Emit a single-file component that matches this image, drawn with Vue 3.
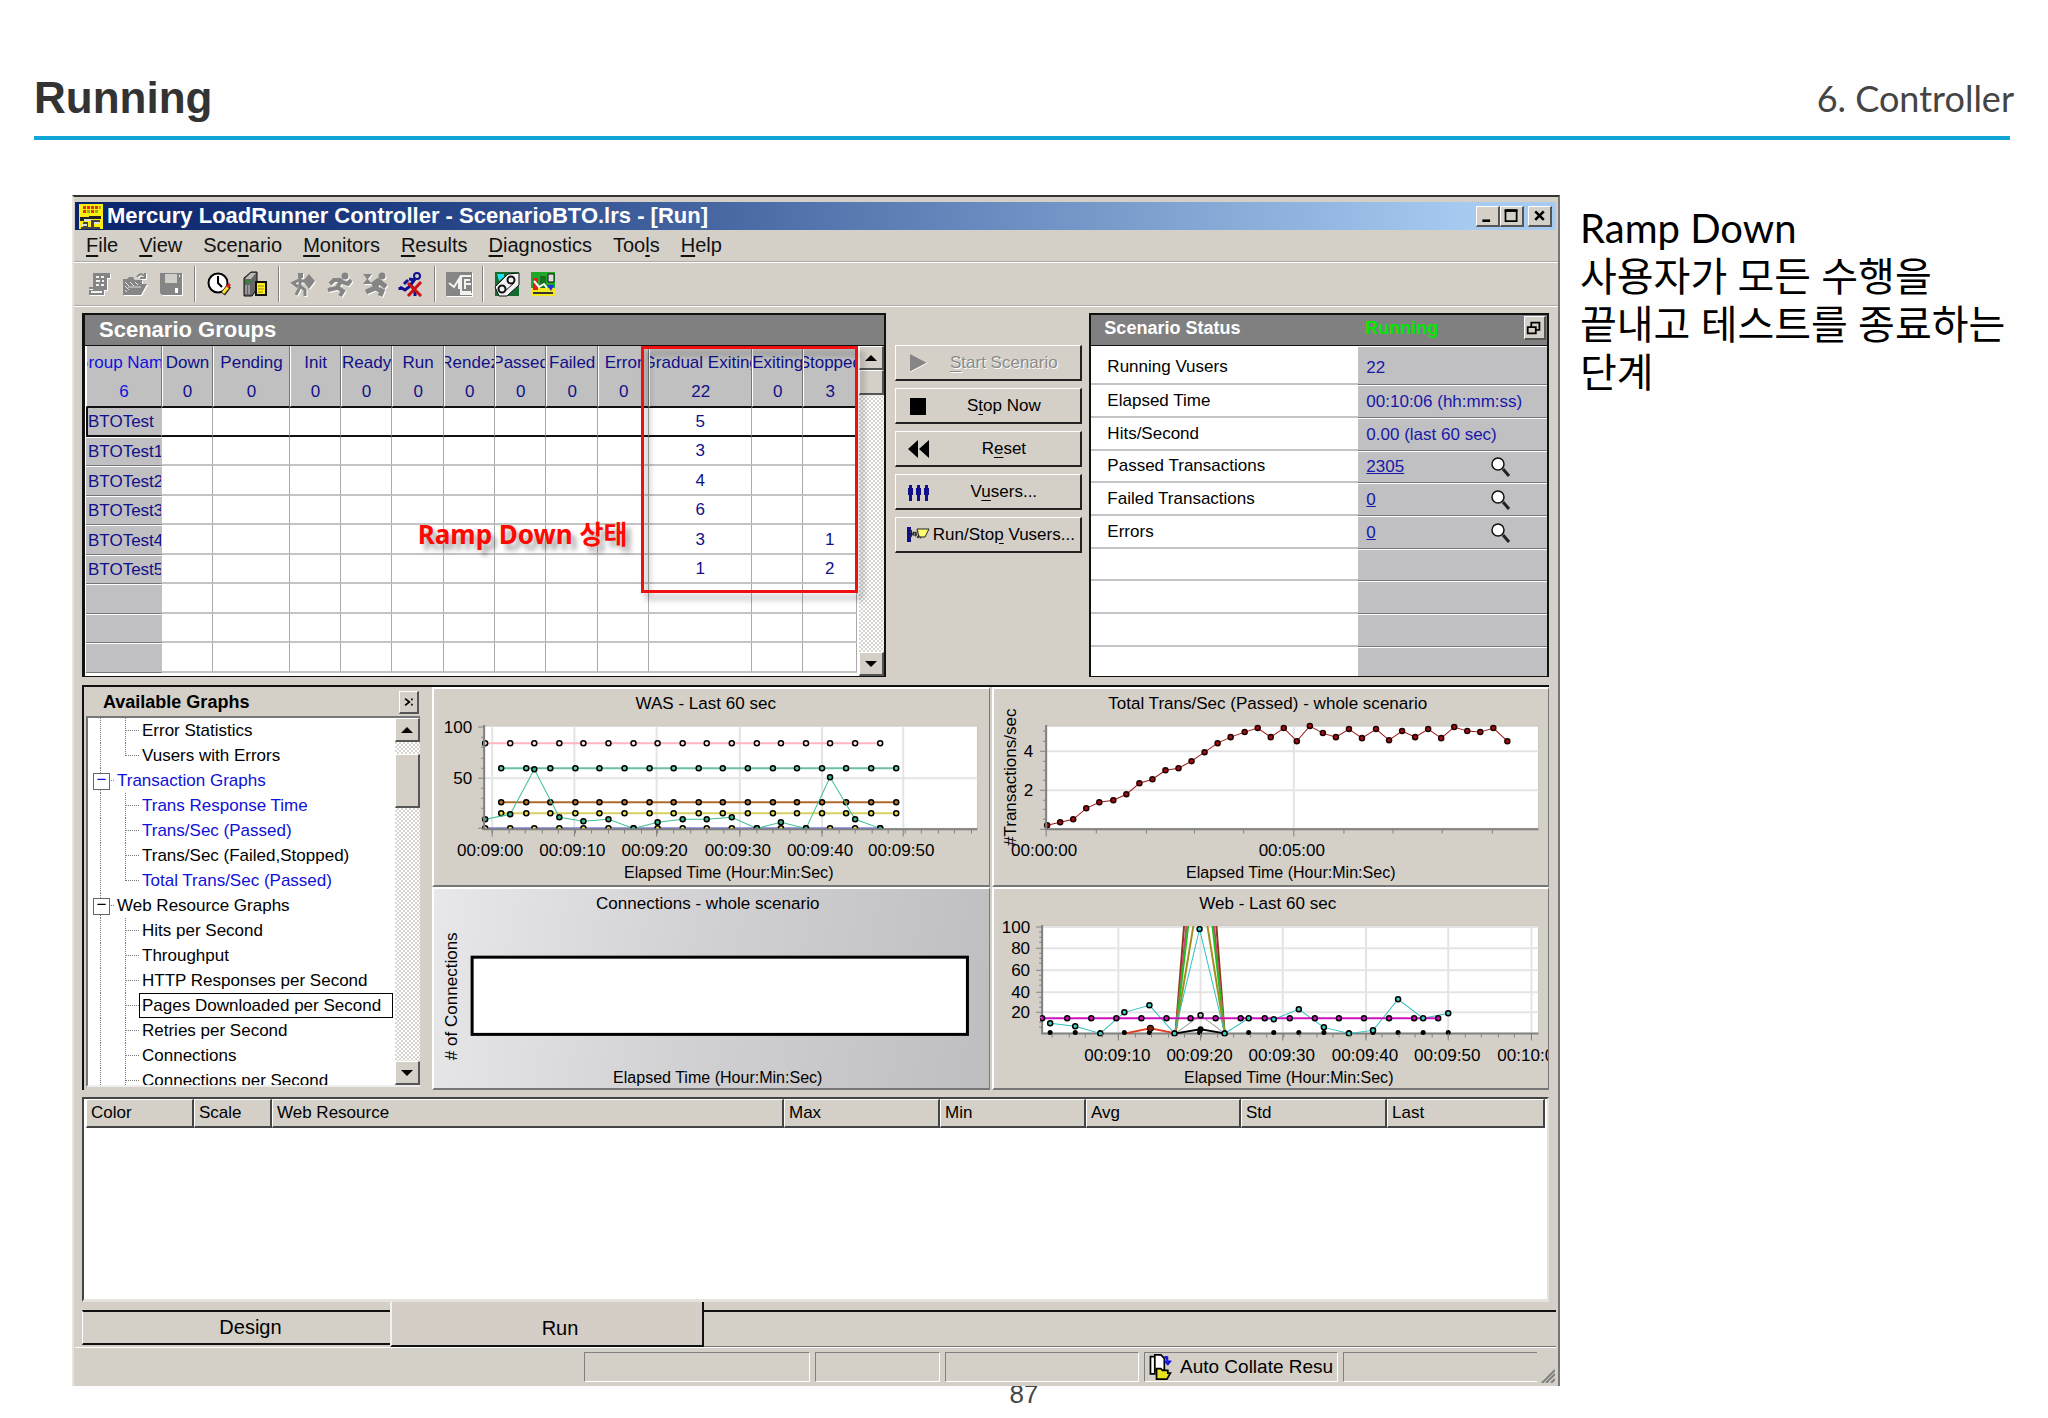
<script setup>
const menus = [
  ['', 'F', 'ile'], ['', 'V', 'iew'], ['Sce', 'n', 'ario'], ['', 'M', 'onitors'],
  ['', 'R', 'esults'], ['', 'D', 'iagnostics'], ['Too', 'l', 's'], ['', 'H', 'elp'],
]

const columns = [
  { name: 'Group Name', total: 6, width: 76 },
  { name: 'Down', total: 0, width: 51 },
  { name: 'Pending', total: 0, width: 77 },
  { name: 'Init', total: 0, width: 51 },
  { name: 'Ready', total: 0, width: 51 },
  { name: 'Run', total: 0, width: 52 },
  { name: 'Rendez', total: 0, width: 51 },
  { name: 'Passed', total: 0, width: 51 },
  { name: 'Failed', total: 0, width: 52 },
  { name: 'Error', total: 0, width: 51 },
  { name: 'Gradual Exiting', total: 22, width: 103 },
  { name: 'Exiting', total: 0, width: 51 },
  { name: 'Stopped', total: 3, width: 54 },
]
const groups = [
  { name: 'BTOTest', exiting: 5 },
  { name: 'BTOTest1', exiting: 3 },
  { name: 'BTOTest2', exiting: 4 },
  { name: 'BTOTest3', exiting: 6 },
  { name: 'BTOTest4', exiting: 3, stopped: 1 },
  { name: 'BTOTest5', exiting: 1, stopped: 2 },
  {}, {}, {},
]
const cell = (g, i) => (i === 10 ? g.exiting : i === 12 ? g.stopped : '')

const status = [
  { label: 'Running Vusers', value: '22' },
  { label: 'Elapsed Time', value: '00:10:06 (hh:mm:ss)' },
  { label: 'Hits/Second', value: '0.00 (last 60 sec)' },
  { label: 'Passed Transactions', value: '2305', link: true },
  { label: 'Failed Transactions', value: '0', link: true },
  { label: 'Errors', value: '0', link: true },
  {}, {}, {}, {},
]

const tree = [
  { text: 'Error Statistics' },
  { text: 'Vusers with Errors', last: true },
  { text: 'Transaction Graphs', parent: true, active: true },
  { text: 'Trans Response Time', active: true },
  { text: 'Trans/Sec (Passed)', active: true },
  { text: 'Trans/Sec (Failed,Stopped)' },
  { text: 'Total Trans/Sec (Passed)', active: true, last: true },
  { text: 'Web Resource Graphs', parent: true },
  { text: 'Hits per Second' },
  { text: 'Throughput' },
  { text: 'HTTP Responses per Second' },
  { text: 'Pages Downloaded per Second', focus: true },
  { text: 'Retries per Second' },
  { text: 'Connections' },
  { text: 'Connections per Second' },
]

const series = (x0, step, ys) => ys.map((y, i) => [Math.round(x0 + step * i), y])
const flat = (x0, step, n, y) => series(x0, step, Array(n).fill(y))
const line = (pts) => pts.map((p) => p.join(',')).join(' ')

const was = [
  { color: '#ffb6c1', dot: '#ffe4e8', pts: flat(51, 24.6, 17, 54) },
  { color: '#6cc0a8', dot: '#66cdaa', pts: flat(67, 24.6, 17, 79) },
  { color: '#b06a28', dot: '#b8762b', pts: flat(67, 24.6, 17, 113) },
  { color: '#d8d060', dot: '#e6e04a', pts: flat(67, 24.6, 17, 124) },
  { color: '#8080e0', dot: '#e6e04a', pts: flat(51, 24.6, 17, 139) },
  { color: '#3cc090', dot: '#3cb890', pts: series(51, 24.6, [130, 125, 80, 128, 132, 130, 139, 133, 130, 130, 128, 139, 133, 139, 88, 130, 139]) },
]
const wasTicks = [['00:09:00', 58], ['00:09:10', 140], ['00:09:20', 222], ['00:09:30', 305], ['00:09:40', 387], ['00:09:50', 468]]

const trans = series(53, 13.1, [136, 133, 130, 119, 113, 111, 105, 94, 90, 81, 79, 72, 63, 54, 48, 43, 39, 48, 39, 52, 37, 44, 48, 40, 49, 40, 51, 42, 48, 40, 49, 38, 42, 43, 39, 52])

const webCyan = series(56, 24.8, [134, 137, 144, 123, 116, 144, 40, 144, 129, 130, 120, 138, 144, 141, 110, 129, 124])
const webBase = flat(56, 24.8, 17, 144)
const webMagenta = flat(48, 24.7, 17, 129)
const webSpikes = [['#8b3a1a', -169], ['#d04070', -100], ['#20c020', -68], ['#a09020', -6]]
const webTicks = [['00:09:10', 124], ['00:09:20', 206], ['00:09:30', 288], ['00:09:40', 371], ['00:09:50', 453], ['00:10:00', 536]]
const webY = [[100, 38], [80, 59], [60, 81], [40, 103], [20, 123]]

const resultCols = [['Color', 108], ['Scale', 78], ['Web Resource', 512], ['Max', 156], ['Min', 146], ['Avg', 155], ['Std', 146], ['Last', 158]]
</script>

<template>
  <div class="page">
    <header class="page-head">
      <h1>Running</h1>
      <p>6. Controller</p>
    </header>

    <main class="content">
      <section class="window">
        <div class="titlebar">
          <svg class="app-icon" viewBox="0 0 24 25" shape-rendering="crispEdges">
            <rect width="24" height="25" fill="#ffee10" />
            <path d="M4 2h3v3H4zM8 2h3v3H8zM12 2h3v3h-3zM16 2h3v3h-3zM4 6h3v3H4zM12 6h3v3h-3z" fill="#e23018" />
            <path d="M8 6h3v3H8zM16 6h3v3h-3zM20 2h2v3h-2z" fill="#88b020" />
            <path d="M1 13h9v-1h12v3H11v2H1z" fill="#222" />
            <path d="M4 18h5v5h3v-7h9v2h-6v5h6v2H2v-2h2z" fill="#444" />
            <path d="M5 16h7M15 19h6M3 21h5" stroke="#ddd" stroke-width="2" />
          </svg>
          <h2>Mercury LoadRunner Controller - ScenarioBTO.lrs - [Run]</h2>
          <div class="win-buttons">
            <button type="button" aria-label="Minimize"><svg viewBox="0 0 24 21"><path d="M6 16h9" stroke="#000" stroke-width="3" /></svg></button>
            <button type="button" aria-label="Maximize"><svg viewBox="0 0 24 21"><path d="M5 4.500h13v12H5z" fill="none" stroke="#000" stroke-width="2" /><path d="M4 4h15" stroke="#000" stroke-width="3" /></svg></button>
            <button type="button" aria-label="Close" class="close"><svg viewBox="0 0 24 21"><path d="M7 5l10 10M17 5L7 15" stroke="#000" stroke-width="3" /></svg></button>
          </div>
        </div>

        <nav class="menubar">
          <a v-for="m in menus" :key="m[1] + m[2]" href="#">{{ m[0] }}<u>{{ m[1] }}</u>{{ m[2] }}</a>
        </nav>

        <div class="toolbar">
          <button type="button" aria-label="New" class="off"><svg viewBox="0 0 26 26"><path d="M7 2h17v5h-3v12h-3v5H3v-5h4z" fill="#858585" /><path d="M10 6h3M15 6h3M10 10h4M16 10h2M10 14h3M15 14h3M5 21h11" stroke="#f4f2ee" stroke-width="2" /><path d="M8 2v15H3" fill="none" stroke="#858585" stroke-width="2" /></svg></button>
          <button type="button" aria-label="Open" class="off"><svg viewBox="0 0 26 26"><path d="M1 8h4l2-2h4l2 3h7v4h5l-6 11H1z" fill="#858585" /><path d="M15 6q4-5 7-1M23 2v5h-5" fill="none" stroke="#858585" stroke-width="2" /><path d="M3 11l4 4M3 15l4 4M8 11l4 4M13 11l3 3M3 19l2 2" stroke="#e8e6e0" stroke-width="1" /><path d="M6 16h13" stroke="#ddd" /></svg></button>
          <button type="button" aria-label="Save" class="off"><svg viewBox="0 0 26 26"><path d="M2 2h22v22H4l-2-2z" fill="#858585" /><path d="M7 3h12v9H7z" fill="#d0cec8" /><path d="M17 17h3v5h-3zM21 4h1v2h-1z" fill="#fff" /></svg></button>
          <i></i>
          <button type="button" aria-label="Schedule"><svg viewBox="0 0 26 26"><circle cx="12" cy="12" r="9.500" fill="#fff" stroke="#000" stroke-width="2" /><path d="M12 5v7l4 4" fill="none" stroke="#000" stroke-width="2" /><path d="M23 15l-6 8" stroke="#222" stroke-width="5" /><path d="M22 16l-5 6" stroke="#ffe030" stroke-width="3" /><path d="M24 13l-3 3" stroke="#e02020" stroke-width="3" /></svg></button>
          <button type="button" aria-label="Load generators"><svg viewBox="0 0 26 26"><path d="M2 7l7-6h6v17l-5 7H2z" fill="#666" stroke="#111" /><path d="M3 8l6-6h5l-5 6z" fill="#bbb" /><path d="M3 9h7v3H3z" fill="#3a8040" /><path d="M4 14v9M7 14v9" stroke="#ccc" /><path d="M14 11h10v13H14z" fill="#ffee20" stroke="#111" stroke-width="2" /><path d="M16 15h6M16 18h6M16 21h5" stroke="#a08800" /></svg></button>
          <i></i>
          <button type="button" aria-label="Initialize" class="off"><svg viewBox="0 0 26 26"><path d="M8 2h5v5H8zM13 10l6-7 6 7-6 8z" fill="#858585" /><path d="M10 7v9l-4 8M10 15l5 4v6M9 9l-6 3 5 4M10 10h7" fill="none" stroke="#858585" stroke-width="3" /></svg></button>
          <button type="button" aria-label="Run Vuser" class="off"><svg viewBox="0 0 26 26"><circle cx="19" cy="5" r="3.500" fill="#858585" /><path d="M16 8l-5 9-9 2M11 16l6 4-3 5M15 9H8l-4 4M16 11l6 2 3-4" fill="none" stroke="#858585" stroke-width="4" /></svg></button>
          <button type="button" aria-label="Gradual stop" class="off"><svg viewBox="0 0 26 26"><circle cx="20" cy="5" r="3.500" fill="#858585" /><path d="M1 3h9l-4 5 4 5H1l4-5z" fill="#858585" /><path d="M18 8l-5 9-9 4M13 17l7 3-2 5M17 9l-7 5M18 11l6 5" fill="none" stroke="#858585" stroke-width="5" /></svg></button>
          <button type="button" aria-label="Stop Vuser"><svg viewBox="0 0 26 26"><circle cx="19" cy="5" r="3" fill="none" stroke="#101090" stroke-width="2" /><path d="M17 8l-6 8-4 3-5-3M11 8l6 1M10 9l-4 4M13 14l4 6v5M2 16v3" fill="none" stroke="#101090" stroke-width="3" /><path d="M10 12l13 13M23 11L10 25" stroke="#d01010" stroke-width="3" /></svg></button>
          <i></i>
          <button type="button" aria-label="Vuser report" class="off"><svg viewBox="0 0 26 26"><path d="M0 1h26v24H0z" fill="#858585" /><path d="M3 12l5 4 5-8v10M25 5H15v16h10M24 9h-5v9M20 13h5M14 23h12" fill="none" stroke="#f4f2ee" stroke-width="2" /></svg></button>
          <i></i>
          <button type="button" aria-label="Analysis"><svg viewBox="0 0 26 26"><path d="M1 1h24v24H1z" fill="#156a30" /><path d="M1 16L14 3l11-1v12L13 25H5z" fill="#f2f2f2" stroke="#111" /><path d="M3 3h7v3l-5 4z" fill="#20e0f0" /><circle cx="17" cy="9" r="3.500" fill="none" stroke="#111" stroke-width="2" /><circle cx="8" cy="18" r="3.500" fill="none" stroke="#111" stroke-width="2" /><path d="M10 21l10-9" stroke="#111" /></svg></button>
          <button type="button" aria-label="Graphs"><svg viewBox="0 0 26 26"><path d="M1 1h24v24H1z" fill="#20a828" /><path d="M1 17h24v8H1z" fill="#f4e820" /><path d="M3 7h5v12H3z" fill="#e02020" /><path d="M10 5h6v12h-6z" fill="#187020" /><path d="M4 10l5 6 5-3 3 4" fill="none" stroke="#fff" stroke-width="2" /><path d="M18 3h6v8h-6z" fill="#ddd" stroke="#111" /><path d="M17 14h7l-3 6z" fill="#2030e0" /><path d="M3 22h20" stroke="#333" stroke-width="2" /></svg></button>
        </div>

        <div class="top-row">
          <section class="panel groups">
            <h3>Scenario Groups</h3>
            <div class="grid-wrap">
              <table>
                <colgroup><col v-for="c in columns" :key="c.name" :style="{ width: c.width + 'px' }" /></colgroup>
                <thead>
                  <tr>
                    <th v-for="c in columns" :key="c.name" scope="col"><div>{{ c.name }}</div><div>{{ c.total }}</div></th>
                  </tr>
                </thead>
                <tbody>
                  <tr v-for="(g, r) in groups" :key="r" :class="{ selected: r === 0 }">
                    <th scope="row">{{ g.name }}</th>
                    <td v-for="i in 12" :key="i">{{ cell(g, i) }}</td>
                  </tr>
                </tbody>
              </table>
              <div class="scroll">
                <button type="button" aria-label="Scroll up"><b class="up"></b></button>
                <span class="thumb"></span>
                <button type="button" aria-label="Scroll down"><b class="down"></b></button>
              </div>
              <div class="callout"></div>
              <strong class="callout-label">Ramp Down 상태</strong>
            </div>
          </section>

          <div class="actions">
            <button type="button" disabled><svg viewBox="0 0 24 24"><path d="M4 3l17 9-17 9z" fill="#858585" /><path d="M4 21l17-9" stroke="#fff" /></svg><span><u>S</u>tart Scenario</span></button>
            <button type="button"><svg viewBox="0 0 24 24"><path d="M4 4h16v17H4z" /></svg><span>S<u>t</u>op Now</span></button>
            <button type="button"><svg viewBox="0 0 24 24"><path d="M12 3v18L2 12zM23 3v18l-10-9z" /></svg><span>R<u>e</u>set</span></button>
            <button type="button"><svg viewBox="0 0 24 24"><g fill="#101088"><path d="M3 5h3v3h1v7H6v6H3v-6H2V8h1zM11 5h3v3h1v7h-1v6h-3v-6h-1V8h1zM19 5h3v3h1v7h-1v6h-3v-6h-1V8h1z" /></g></svg><span>V<u>u</u>sers...</span></button>
            <button type="button"><svg viewBox="0 0 24 24"><path d="M1 4h4v3h1v6H5v6H1z" fill="#101088" /><path d="M11 6h12l-4 8h-6z" fill="#ffff70" stroke="#222" /><path d="M4 8l9 7M4 14l8-6M7 9l8 6" stroke="#333" stroke-width="2" stroke-dasharray="2 1" fill="none" /></svg><span>Run/Sto<u>p</u> Vusers...</span></button>
          </div>

          <section class="panel status">
            <div class="status-head">
              <h3>Scenario Status</h3>
              <strong>Running</strong>
              <button type="button" aria-label="Detach panel"><svg viewBox="0 0 20 20"><path d="M7 4h9v8H7z" fill="#d4d0c8" stroke="#000" stroke-width="2" /><path d="M3 9h9v7H3z" fill="#d4d0c8" stroke="#000" stroke-width="2" /></svg></button>
            </div>
            <table>
              <tbody>
                <tr v-for="(s, i) in status" :key="i">
                  <th scope="row">{{ s.label }}</th>
                  <td>
                    <div>
                      <a v-if="s.link" href="#">{{ s.value }}</a><template v-else>{{ s.value }}</template>
                      <svg v-if="s.link" viewBox="0 0 20 20"><circle cx="7" cy="7" r="6" fill="#fff" stroke="#111" stroke-width="1.500" /><path d="M12 12l6 7" stroke="#222" stroke-width="3" /></svg>
                    </div>
                  </td>
                </tr>
              </tbody>
            </table>
          </section>
        </div>

        <div class="mid-row">
          <section class="available">
            <div class="available-head">
              <h3>Available Graphs</h3>
              <button type="button" aria-label="Close list"><svg viewBox="0 0 20 20"><path d="M6 6l5 4-5 4M14 6v2M14 12v2" fill="none" stroke="#000" stroke-width="2" /></svg></button>
            </div>
            <div class="tree-wrap">
              <ul>
                <li v-for="t in tree" :key="t.text" :class="{ parent: t.parent, active: t.active, last: t.last, focus: t.focus }">
                  <i class="rail"></i><i v-if="!t.parent" class="rail second"></i><i class="stub"></i><span>{{ t.text }}</span>
                </li>
              </ul>
              <div class="scroll">
                <button type="button" aria-label="Scroll up"><b class="up"></b></button>
                <span class="thumb long"></span>
                <button type="button" aria-label="Scroll down"><b class="down"></b></button>
              </div>
            </div>
          </section>

          <div class="charts">
            <svg viewBox="0 0 553 195" class="chart">
              <text x="271" y="20" class="c">WAS - Last 60 sec</text>
              <rect x="50" y="37" width="492" height="102" fill="#fff" stroke="#c8c6c0" />
              <path v-for="t in wasTicks" :key="t[0]" :d="`M${t[1]} 37V139`" stroke="#e4e4e4" stroke-width="2" />
              <path d="M50 89H542" stroke="#e4e4e4" stroke-width="2" />
              <g v-for="(s, i) in was" :key="i">
                <polyline :points="line(s.pts)" fill="none" :stroke="s.color" :stroke-width="i < 5 ? 2 : 1" />
                <circle v-for="p in s.pts" :key="p[0]" :cx="p[0]" :cy="p[1]" r="2.500" :fill="s.dot" stroke="#000" stroke-width="1.500" />
              </g>
              <rect x="46" y="140" width="496" height="4" fill="#d4d0c8" />
              <path d="M50 36V140H542" fill="none" stroke="#808080" stroke-width="2" />
              <path d="M44 38h6M44 89h6M44 139h6M47 48h3M47 58h3M47 69h3M47 79h3M47 99h3M47 109h3M47 119h3M47 129h3" stroke="#808080" />
              <path v-for="n in 30" :key="n" :d="`M${Math.round(42 + 16.45 * n)} 140v4`" stroke="#808080" />
              <path v-for="t in wasTicks" :key="'k' + t[0]" :d="`M${t[1]} 140v7`" stroke="#808080" />
              <text x="38" y="44" class="e">100</text>
              <text x="38" y="95" class="e">50</text>
              <text v-for="t in wasTicks" :key="'l' + t[0]" :x="t[1] - 2" y="167" class="c">{{ t[0] }}</text>
              <text x="294" y="189" class="c axis">Elapsed Time (Hour:Min:Sec)</text>
            </svg>

            <svg viewBox="0 0 553 195" class="chart">
              <text x="273" y="20" class="c">Total Trans/Sec (Passed) - whole scenario</text>
              <rect x="52" y="37" width="491" height="102" fill="#fff" stroke="#c8c6c0" />
              <path d="M299 37V139M52 62H543M52 101H543" stroke="#e4e4e4" stroke-width="2" />
              <polyline :points="line(trans)" fill="none" stroke="#a01818" stroke-width="1" />
              <circle v-for="p in trans" :key="p[0]" :cx="p[0]" :cy="p[1]" r="2.500" fill="#a01010" stroke="#200" stroke-width="1.500" />
              <path d="M52 36V140H543" fill="none" stroke="#808080" stroke-width="2" />
              <path d="M46 62h6M46 101h6M46 140h6M49 42h3M49 52h3M49 72h3M49 81h3M49 91h3M49 111h3M49 120h3M49 130h3M52 140v7M102 140v4M152 140v4M200 140v4M249 140v4M299 140v7M349 140v4M398 140v4M447 140v4M497 140v4" stroke="#808080" />
              <text x="39" y="68" class="e">4</text>
              <text x="39" y="107" class="e">2</text>
              <text transform="translate(22 88) rotate(-90)" class="c">#Transactions/sec</text>
              <text x="50" y="167" class="c">00:00:00</text>
              <text x="297" y="167" class="c">00:05:00</text>
              <text x="296" y="189" class="c axis">Elapsed Time (Hour:Min:Sec)</text>
            </svg>

            <svg viewBox="0 0 553 199" class="chart shaded">
              <text x="273" y="20" class="c">Connections - whole scenario</text>
              <rect x="38" y="68" width="494" height="77" fill="#fff" stroke="#000" stroke-width="3" />
              <text transform="translate(23 107) rotate(-90)" class="c">#&nbsp;of Connections</text>
              <text x="283" y="193" class="c axis">Elapsed Time (Hour:Min:Sec)</text>
            </svg>

            <svg viewBox="0 0 553 199" class="chart">
              <defs><clipPath id="web-plot"><rect x="46" y="37" width="500" height="110" /></clipPath></defs>
              <text x="273" y="20" class="c">Web - Last 60 sec</text>
              <rect x="48" y="37" width="495" height="107" fill="#fff" stroke="#c8c6c0" />
              <path v-for="t in webTicks" :key="t[0]" :d="`M${t[1]} 37V144`" stroke="#e4e4e4" stroke-width="2" />
              <path v-for="t in webY" :key="t[0]" :d="`M48 ${t[1]}H543`" stroke="#e4e4e4" stroke-width="2" />
              <path d="M48 36V144H543" fill="none" stroke="#808080" stroke-width="2" />
              <g clip-path="url(#web-plot)">
                <polyline v-for="s in webSpikes" :key="s[0]" :points="`181,144 206,${s[1]} 230,144`" fill="none" :stroke="s[0]" stroke-width="2" />
                <polyline points="181,144 206,126 230,144" fill="none" stroke="#a0a0a0" />
                <polyline points="131,144 156,139 181,144" fill="none" stroke="#e04020" stroke-width="2" />
                <polyline points="181,144 206,140 230,144" fill="none" stroke="#000" stroke-width="2" />
                <circle v-for="p in webBase" :key="p[0]" :cx="p[0]" :cy="p[1] - 1" r="2.500" fill="#000" />
                <circle cx="156" cy="139" r="3" fill="#702010" stroke="#000" />
                <circle cx="206" cy="140" r="3" />
                <polyline :points="line(webCyan)" fill="none" stroke="#30c0c0" />
                <path d="M48 129H444" stroke="#d010c0" stroke-width="2" />
                <circle v-for="p in webMagenta" :key="p[0]" :cx="p[0]" :cy="p[1]" r="2.500" fill="#d010c0" stroke="#000" stroke-width="1.500" />
                <circle cx="206" cy="126" r="2.500" fill="#c0c0c0" stroke="#000" stroke-width="1.500" />
                <circle v-for="p in webCyan" :key="p[0]" :cx="p[0]" :cy="p[1]" r="2.500" fill="#40d0c8" stroke="#000" stroke-width="1.500" />
              </g>
              <path v-for="t in webY" :key="'k' + t[0]" :d="`M42 ${t[1]}h6M45 ${t[1] + 5}h3M45 ${t[1] + 10}h3M45 ${t[1] + 15}h3`" stroke="#808080" />
              <path v-for="n in 30" :key="n" :d="`M${Math.round(42 + 16.45 * n)} 144v4`" stroke="#808080" />
              <path v-for="t in webTicks" :key="'m' + t[0]" :d="`M${t[1]} 144v7`" stroke="#808080" />
              <text v-for="t in webY" :key="'l' + t[0]" x="36" :y="t[1] + 6" class="e">{{ t[0] }}</text>
              <text v-for="t in webTicks" :key="'n' + t[0]" :x="t[1] - 1" y="172" class="c">{{ t[0] }}</text>
              <text x="294" y="193" class="c axis">Elapsed Time (Hour:Min:Sec)</text>
            </svg>
          </div>
        </div>

        <div class="results">
          <table>
            <colgroup><col v-for="c in resultCols" :key="c[0]" :style="{ width: c[1] + 'px' }" /></colgroup>
            <thead><tr><th v-for="c in resultCols" :key="c[0]" scope="col">{{ c[0] }}</th></tr></thead>
          </table>
        </div>

        <div class="tabs">
          <button type="button">Design</button>
          <button type="button" class="on">Run</button>
          <span></span>
        </div>

        <footer class="statusbar">
          <span class="s1"></span><span class="s2"></span><span class="s3"></span>
          <span class="s3 auto">
            <svg viewBox="0 0 26 30"><path d="M2 3h5v20H2zM7 1h7l4 4v14H7z" fill="#fff" stroke="#000" stroke-width="2" /><path d="M18 3h4v7M18 8l4 5 4-5z" fill="#1010e0" stroke="#1010e0" /><path d="M9 17h5l2 2h6v3h3l-4 7H9z" fill="#e8e020" stroke="#000" stroke-width="2" /></svg>
            Auto Collate Resu
          </span>
          <span class="s3 tail"></span>
          <svg class="grip" viewBox="0 0 14 14"><path d="M1 14L14 1M5 14l9-9M10 14l4-4" stroke="#808080" stroke-width="2" /></svg>
        </footer>
      </section>

      <aside>
        Ramp Down<br />사용자가 모든 수행을<br />끝내고 테스트를 종료하는<br />단계
      </aside>
    </main>
    <p class="page-no">87</p>
  </div>
</template>

<style>
body {
  margin: 0;
  background: #fefefe;
}
</style>

<style scoped>
* {
  box-sizing: border-box;
}
.page {
  font-family: "Liberation Sans", "Noto Sans CJK KR", sans-serif;
  font-size: 17px;
  color: #000;
}
h1, h2, h3, p, ul {
  margin: 0;
  padding: 0;
}
button {
  font: inherit;
  color: #000;
  padding: 0;
  margin: 0;
}
svg {
  display: block;
}
table {
  border-collapse: separate;
  border-spacing: 0;
  table-layout: fixed;
  width: 100%;
}
u {
  text-underline-offset: 3px;
}

.page-head {
  display: flex;
  justify-content: space-between;
  align-items: center;
  margin: 0 38px 0 34px;
  padding-top: 60px;
  height: 140px;
  border-bottom: 4px solid #12a5d8;
}
.page-head h1 {
  font-size: 44px;
  line-height: 72px;
  color: #333;
}
.page-head p {
  font-family: Lato, sans-serif;
  font-size: 36px;
  line-height: 72px;
  color: #444;
  margin-right: -4px;
}
.content {
  display: flex;
  margin-top: 55px;
  padding-left: 72px;
}
aside {
  width: 488px;
  flex: none;
  padding: 9px 0 0 20px;
  font-family: Lato, "Noto Sans CJK KR", sans-serif;
  font-size: 40px;
  line-height: 48px;
}
.page-no {
  margin-top: -7px;
  text-align: center;
  font-size: 26px;
  line-height: 30px;
  color: #444;
}

.window {
  position: relative;
  z-index: 1;
  flex: 1;
  min-width: 0;
  background: #d4d0c8;
  border-top: 2px solid #333;
  border-left: 2px solid #e6e3dd;
  border-right: 2px solid #777;
  padding-top: 5px;
}
.titlebar {
  display: flex;
  align-items: center;
  height: 28px;
  margin: 0 2px 0 1px;
  padding: 0 4px;
  background: linear-gradient(90deg, #0a246a, #1c3a80 20%, #a6caf0 94%);
}
.app-icon {
  width: 24px;
  height: 25px;
}
.titlebar h2 {
  flex: 1;
  margin-left: 4px;
  font-size: 22px;
  line-height: 28px;
  color: #fff;
}
.win-buttons {
  display: flex;
}
.win-buttons button,
.status-head button,
.available-head button,
.scroll button,
.thumb {
  background: #d4d0c8;
  border: solid;
  border-width: 1px 2px 2px 1px;
  border-color: #fff #555 #555 #fff;
}
.win-buttons button {
  width: 24px;
  height: 21px;
}
.win-buttons svg {
  width: 100%;
  height: 100%;
}
.win-buttons .close {
  margin-left: 4px;
}

.menubar {
  display: flex;
  gap: 21px;
  height: 33px;
  padding-left: 12px;
  border-bottom: 2px groove #fff;
  font-size: 20px;
  line-height: 30px;
}
.menubar a {
  color: #111;
  text-decoration: none;
}
.toolbar {
  display: flex;
  align-items: center;
  gap: 10px;
  height: 44px;
  padding-left: 12px;
  border-bottom: 2px groove #fff;
}
.toolbar button {
  width: 26px;
  height: 26px;
  border: 0;
  background: none;
}
.toolbar svg {
  width: 26px;
  height: 26px;
}
.toolbar .off svg {
  filter: drop-shadow(1px 1px 0 #fff);
}
.toolbar i {
  width: 2px;
  height: 36px;
  border-left: 1px solid #808080;
  border-right: 1px solid #fff;
}

.top-row {
  display: grid;
  grid-template-columns: minmax(0, 805fr) 203px minmax(0, 460fr);
  grid-template-rows: 364px;
  margin: 6px 9px 0 8px;
}
.panel {
  border: 2px solid #111;
  border-bottom-width: 1px;
  background: #fff;
  overflow: hidden;
}
.groups {
  display: flex;
  flex-direction: column;
  border-left-width: 3px;
}
.panel h3 {
  color: #fff;
}
.groups h3 {
  padding-left: 14px;
  height: 31px;
  font-size: 22px;
  line-height: 29px;
  background: #808080;
  border-bottom: 1px solid #111;
}
.grid-wrap {
  position: relative;
  display: flex;
  flex: 1;
  min-height: 0;
  padding-left: 1px;
}
.grid-wrap table {
  flex: 1;
  min-width: 0;
  height: 266px;
  color: #101088;
}
.grid-wrap th,
.grid-wrap td {
  padding: 0;
  font-weight: normal;
  text-align: center;
  overflow: hidden;
  white-space: nowrap;
}
.grid-wrap thead th {
  height: 61px;
  padding-top: 2px;
  background: #c0c0c0;
  border-left: 1px solid #fff;
  border-right: 1px solid #777;
  border-bottom: 1px solid #111;
}
.grid-wrap thead div {
  display: flex;
  justify-content: center;
  line-height: 29px;
}
.grid-wrap thead th:first-child {
  color: #1010e0;
}
.grid-wrap tbody tr > * {
  height: 30px;
  line-height: 27px;
  border-right: 1px solid #aaa;
  border-bottom: 2px solid #c4c4c4;
}
.grid-wrap tbody tr:nth-child(even) > * {
  height: 29px;
}
.grid-wrap tbody th {
  background: #c0bfc2;
  text-align: left;
  padding-left: 2px;
  border-top: 1px solid #fff;
  border-right-color: #c0bfc2;
  border-bottom: 1px solid #777;
}
.grid-wrap tbody .selected > * {
  border-top: 1px solid #111;
  border-bottom: 2px solid #111;
}
.grid-wrap tbody .selected > :first-child {
  border-left: 2px solid #111;
  padding-left: 0;
}
.scroll {
  display: flex;
  flex-direction: column;
  width: 25px;
  flex: none;
  background: repeating-conic-gradient(#fff 0 25%, #d8d5cf 0 50%) 0 0 / 4px 4px;
}
.grid-wrap .scroll {
  margin-left: 2px;
}
.scroll button {
  display: flex;
  align-items: center;
  justify-content: center;
  height: 24px;
}
.scroll button:last-child {
  margin-top: auto;
}
.thumb {
  height: 25px;
}
.thumb.long {
  margin-top: 12px;
  height: 54px;
}
.up,
.down {
  border: 6px solid transparent;
}
.up {
  border-top: 0;
  border-bottom-color: #000;
}
.down {
  border-bottom: 0;
  border-top-color: #000;
}
.callout {
  position: absolute;
  top: 0;
  right: 26px;
  width: 217px;
  height: 247px;
  border: 3px solid #f01010;
  filter: drop-shadow(5px 6px 3px rgba(0, 0, 0, 0.35));
}
.callout-label {
  position: absolute;
  top: 170px;
  right: 257px;
  font-family: "Noto Sans", "Noto Sans CJK KR", sans-serif;
  font-size: 26px;
  line-height: 36px;
  color: #ff0800;
  text-shadow: 5px 6px 5px rgba(0, 0, 0, 0.35);
}

.actions {
  display: flex;
  flex-direction: column;
  gap: 7px;
  padding: 32px 7px 0 9px;
}
.actions button {
  display: flex;
  align-items: center;
  height: 36px;
  padding: 0 3px 0 10px;
  background: #d4d0c8;
  border: solid;
  border-width: 1px 2px 2px 1px;
  border-color: #fff #222 #222 #fff;
}
.actions svg {
  width: 24px;
  height: 24px;
}
.actions span {
  flex: 1;
  text-align: center;
  white-space: nowrap;
}
.actions button:disabled {
  color: #8a8a8a;
  text-shadow: 1px 1px 0 #fff;
}

.status-head {
  display: flex;
  align-items: center;
  height: 31px;
  padding: 0 1px 4px 13px;
  background: #808080;
  border-bottom: 1px solid #111;
  font-size: 18px;
}
.status-head h3 {
  width: 261px;
  font-size: 18px;
}
.status-head strong {
  flex: 1;
  color: #00e800;
}
.status-head button {
  width: 22px;
  height: 24px;
}
.status-head svg {
  width: 18px;
  height: 20px;
}
.status tr > * {
  height: 33px;
  padding: 0;
  text-align: left;
  font-weight: normal;
  white-space: nowrap;
  border-bottom: 2px solid #c4c4c4;
}
.status tr:nth-child(3n + 4) > * {
  height: 32px;
}
.status tr:first-child > * {
  height: 39px;
  padding-top: 4px;
}
.status tr:last-child > * {
  height: 30px;
  border-bottom: 0;
}
.status th {
  padding-left: 16px;
  width: 267px;
}
.status td {
  background: #c0bfc2;
  border-bottom: 1px solid #777;
  border-top: 1px solid #fff;
  color: #1818a8;
}
.status td div {
  display: flex;
  align-items: center;
  justify-content: space-between;
  padding: 0 36px 0 8px;
}
.status td a {
  color: inherit;
}
.status td svg {
  width: 20px;
  height: 20px;
}

.mid-row {
  display: flex;
  margin: 8px 9px 0 8px;
  border-top: 2px solid #111;
  border-left: 2px solid #111;
}
.available {
  width: 342px;
  flex: none;
  padding: 1px 6px 0 2px;
}
.available-head {
  display: flex;
  align-items: center;
  justify-content: space-between;
  height: 28px;
  padding: 0 1px 0 17px;
}
.available-head h3 {
  font-size: 18px;
}
.available-head button {
  width: 20px;
  height: 23px;
}
.available-head svg {
  width: 17px;
  height: 20px;
}
.tree-wrap {
  display: flex;
  height: 371px;
  background: #fff;
  border: solid #777;
  border-width: 2px 0 2px 2px;
  border-bottom-color: #eee;
}
ul {
  flex: 1;
  list-style: none;
  overflow: hidden;
}
li {
  position: relative;
  display: flex;
  align-items: center;
  height: 25px;
  line-height: 23px;
  white-space: nowrap;
}
.rail {
  align-self: stretch;
  width: 13px;
  border-right: 1px dotted #777;
}
.second {
  width: 25px;
}
.last .second {
  height: 13px;
  align-self: flex-start;
}
.stub {
  width: 13px;
  border-top: 1px dotted #777;
}
li span {
  padding: 0 2px;
  border: 1px solid transparent;
}
.focus span {
  flex: 1;
  margin-right: 2px;
  border-color: #000;
}
.parent::before {
  content: "−";
  position: absolute;
  left: 5px;
  top: 5px;
  width: 15px;
  height: 15px;
  border: 1px solid #666;
  background: #fff;
  line-height: 12px;
  text-align: center;
}
.active {
  color: #1010d8;
}

.charts {
  flex: 1;
  min-width: 0;
  display: grid;
  grid-template-columns: 1fr 1fr;
  column-gap: 2px;
  margin-left: 6px;
}
.chart {
  width: 100%;
  border: solid;
  border-width: 2px 1px 2px 2px;
  border-color: #fff #777 #777 #fff;
  overflow: hidden;
}
.shaded {
  background: linear-gradient(100deg, #e8e7ea, #d2d1d4 45%, #bebdc0);
}
text {
  font-size: 17px;
}
.c {
  text-anchor: middle;
}
.e {
  text-anchor: end;
}
.axis {
  font-size: 16px;
}

.results {
  height: 205px;
  margin: 7px 9px 0 8px;
  padding-left: 2px;
  padding-right: 3px;
  background: #fff;
  border: solid;
  border-width: 2px 2px 3px;
  border-color: #444 #e6e3dd #e6e3dd #444;
}
.results th {
  height: 29px;
  padding: 0 0 0 4px;
  text-align: left;
  font-weight: normal;
  background: #d4d0c8;
  border-top: 1px solid #fff;
  border-left: 1px solid #fff;
  border-right: 2px solid #444;
  border-bottom: 2px solid #444;
}

.tabs {
  display: flex;
  margin: 0 2px 0 1px;
  height: 46px;
  border-bottom: 1px solid #fff;
}
.tabs > * {
  margin: 8px 0 0;
  border: 0;
  border-top: 2px solid #111;
  background: #d4d0c8;
  font-size: 20px;
}
.tabs button {
  width: 314px;
}
.tabs button:first-child {
  width: 308px;
  margin-left: 7px;
  height: 35px;
  padding-left: 28px;
  border-left: 1px solid #fff;
  border-bottom: 2px solid #111;
}
.tabs .on {
  margin: 0;
  padding: 10px 0 0 26px;
  border-top: 0;
  border-left: 2px solid #f4f2ee;
  border-right: 2px solid #111;
  border-bottom: 2px solid #111;
  background: #d5cec7;
}
.tabs span {
  flex: 1;
  border-bottom: 1px solid #777;
}

.statusbar {
  display: flex;
  justify-content: flex-end;
  height: 38px;
  padding: 4px 21px 4px 0;
  gap: 5px;
}
.statusbar span {
  display: flex;
  align-items: center;
  border: 1px solid #808080;
  border-right-color: #fff;
  border-bottom-color: #fff;
  font-size: 19px;
  white-space: nowrap;
}
.s1 {
  width: 226px;
}
.s2 {
  width: 125px;
}
.s3 {
  width: 194px;
}
.auto {
  gap: 7px;
  padding-left: 2px;
}
.auto svg {
  width: 26px;
  height: 26px;
}
.statusbar .tail {
  border-right: 0;
}
.grip {
  position: absolute;
  right: 3px;
  bottom: 3px;
  width: 14px;
  height: 14px;
}
</style>
